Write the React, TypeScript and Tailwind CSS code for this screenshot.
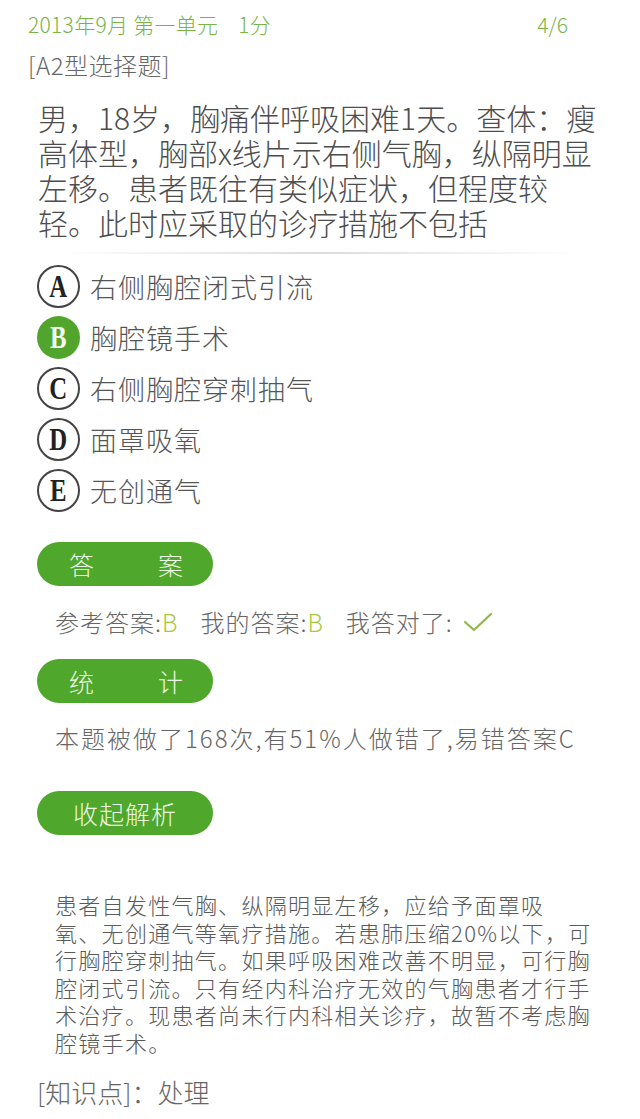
import React from 'react';

const sans = '"Noto Sans CJK SC", "Liberation Sans", sans-serif';

const options = [
  { key: 'A', text: '右侧胸腔闭式引流' },
  { key: 'B', text: '胸腔镜手术', picked: true },
  { key: 'C', text: '右侧胸腔穿刺抽气' },
  { key: 'D', text: '面罩吸氧' },
  { key: 'E', text: '无创通气' },
];

const question = [
  '男，18岁，胸痛伴呼吸困难1天。查体：瘦',
  '高体型，胸部x线片示右侧气胸，纵隔明显',
  '左移。患者既往有类似症状，但程度较',
  '轻。此时应采取的诊疗措施不包括',
];

const analysis = [
  '患者自发性气胸、纵隔明显左移，应给予面罩吸',
  '氧、无创通气等氧疗措施。若患肺压缩20%以下，可',
  '行胸腔穿刺抽气。如果呼吸困难改善不明显，可行胸',
  '腔闭式引流。只有经内科治疗无效的气胸患者才行手',
  '术治疗。现患者尚未行内科相关诊疗，故暂不考虑胸',
  '腔镜手术。',
];

const Pill: React.FC<{ children: React.ReactNode; spread?: boolean }> = ({ children, spread }) => (
  <div
    className={
      'ml-[37px] flex h-[44px] w-[176px] items-center rounded-full bg-[#4fa82b] text-[25px] leading-none text-[#eef8e6] ' +
      (spread ? 'justify-between pl-[32px] pr-[30px]' : 'justify-center tracking-[1px]')
    }
  >
    {children}
  </div>
);

const OptionMark: React.FC<{ letter: string; picked?: boolean }> = ({ letter, picked }) => (
  <div
    className={
      'flex h-[43px] w-[43px] shrink-0 items-center justify-center rounded-full text-[31px] font-bold leading-none ' +
      (picked ? 'bg-[#52a52c] text-[#f4faee]' : 'border-2 border-[#444] bg-white text-[#222]')
    }
    style={{ fontFamily: '"Liberation Serif", "DejaVu Serif", serif' }}
  >
    <span className="inline-block scale-x-[0.8]">{letter}</span>
  </div>
);

export default function App() {
  return (
    <div className="min-h-screen w-full bg-white font-light text-[#555]" style={{ fontFamily: sans }}>
      <header className="flex items-center justify-between pl-[28px] pr-[72px] pt-[10px] text-[21px] leading-[28px] text-[#78b346]">
        <span className="tracking-[0.3px]">2013年9月 第一单元&nbsp;&nbsp;&nbsp;&nbsp;1分</span>
        <span>4/6</span>
      </header>

      <div className="pl-[28px] pt-[12px] text-[24px] leading-[30px] tracking-[0.5px] text-[#666]">[A2型选择题]</div>

      <p className="mt-[20px] whitespace-nowrap pl-[38px] text-[30px] leading-[35px] text-[#4d4d4d]">
        {question.map((l, i) => (
          <React.Fragment key={i}>
            {l}
            <br />
          </React.Fragment>
        ))}
      </p>

      <div className="mx-[60px] mt-[12px] h-[2px] bg-gradient-to-r from-transparent via-[#dcdcdc] to-transparent" />

      <ul className="mt-[11px] flex flex-col gap-[8px] pl-[37px]">
        {options.map((o) => (
          <li key={o.key} className="flex items-center gap-[10px]">
            <OptionMark letter={o.key} picked={o.picked} />
            <span className="text-[27px] leading-[36px] tracking-[1px] text-[#555]">{o.text}</span>
          </li>
        ))}
      </ul>

      <div className="mt-[30px]">
        <Pill spread>
          <span>答</span>
          <span>案</span>
        </Pill>
      </div>

      <div className="mt-[19px] flex h-[34px] items-center pl-[55px] text-[24px] tracking-[1px] text-[#666]">
        <span>参考答案:</span>
        <span className="text-[#a8c93a]">B</span>
        <span className="ml-[22px]">我的答案:</span>
        <span className="text-[#a8c93a]">B</span>
        <span className="ml-[22px]">我答对了:</span>
        <svg className="ml-[10px]" width="30" height="22" viewBox="0 0 30 22" fill="none">
          <path d="M2 11 L11 19 L28 3" stroke="#8fb84c" strokeWidth="2.2" strokeLinecap="round" strokeLinejoin="round" />
        </svg>
      </div>

      <div className="mt-[20px]">
        <Pill spread>
          <span>统</span>
          <span>计</span>
        </Pill>
      </div>

      <div className="mt-[18px] pl-[55px] text-[24px] leading-[34px] tracking-[2px] text-[#666]">
        本题被做了168次,有51%人做错了,易错答案C
      </div>

      <div className="mt-[36px]">
        <Pill>收起解析</Pill>
      </div>

      <p className="mt-[56px] whitespace-nowrap pl-[55px] text-[22px] leading-[27.6px] tracking-[1.3px] text-[#5a5a5a]">
        {analysis.map((l, i) => (
          <React.Fragment key={i}>
            {l}
            <br />
          </React.Fragment>
        ))}
      </p>

      <div className="mt-[17px] pl-[37px] text-[26px] leading-[36px] text-[#666]">[知识点]：处理</div>
    </div>
  );
}
